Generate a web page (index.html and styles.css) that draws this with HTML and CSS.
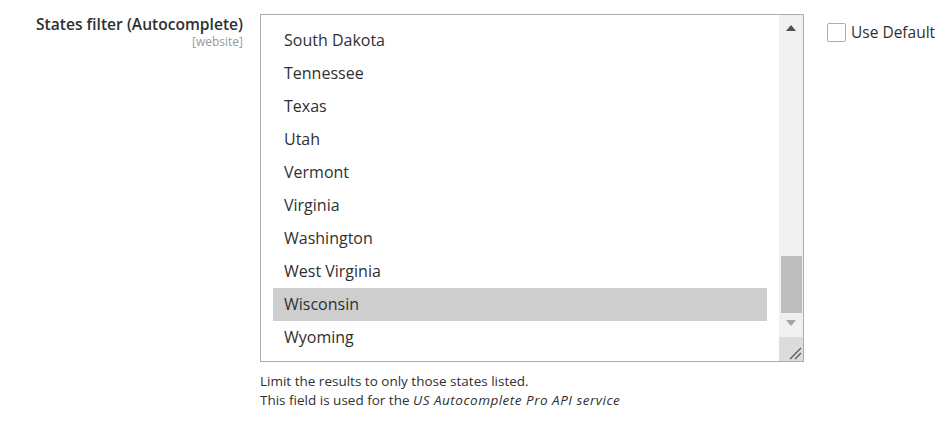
FILE: index.html
```html
<!DOCTYPE html>
<html>
<head>
<meta charset="utf-8">
<link rel="stylesheet" href="styles.css">
</head>
<body>
<div class="field">
  <div class="label">
    <span class="label-text">States filter (Autocomplete)</span>
    <span class="scope">[website]</span>
  </div>
  <div class="control">
    <div class="listbox">
      <div class="options">
        <div class="option">South Dakota</div>
        <div class="option">Tennessee</div>
        <div class="option">Texas</div>
        <div class="option">Utah</div>
        <div class="option">Vermont</div>
        <div class="option">Virginia</div>
        <div class="option">Washington</div>
        <div class="option">West Virginia</div>
        <div class="option selected">Wisconsin</div>
        <div class="option">Wyoming</div>
      </div>
      <div class="scrollbar">
        <div class="arrow up"></div>
        <div class="track"><div class="thumb"></div></div>
        <div class="arrow down"></div>
        <div class="resizer">
          <svg width="14" height="14" viewBox="0 0 14 14"><path d="M2 13 L13 2 M7 13 L13 7" stroke="#555" stroke-width="1.3" fill="none"/></svg>
        </div>
      </div>
    </div>
    <div class="note">
      <div>Limit the results to only those states listed.</div>
      <div>This field is used for the <em>US Autocomplete Pro API service</em></div>
    </div>
  </div>
  <label class="use-default"><span class="checkbox"></span><span>Use Default</span></label>
</div>
</body>
</html>
```
FILE: styles.css
```css
* { box-sizing: border-box; }
body {
  margin: 0;
  background: #fff;
  font-family: "Open Sans", "Liberation Sans", sans-serif;
  color: #303030;
}
.field {
  display: flex;
  align-items: flex-start;
  padding-top: 14px;
}
.label {
  width: 244px;
  padding-right: 1px;
  display: flex;
  flex-direction: column;
  align-items: flex-end;
  margin-right: 16px;
}
.label-text {
  font-size: 15.6px;
  font-weight: 600;
  line-height: 20px;
}
.scope {
  font-size: 12px;
  color: #999;
  line-height: 14px;
  margin-top: 1px;
}
.control {
  width: 544px;
}
.listbox {
  height: 348px;
  border: 1px solid #adadad;
  display: flex;
  overflow: hidden;
}
.options {
  flex: 1;
  padding: 9px 12px 0 12px;
}
.option {
  height: 33px;
  line-height: 33px;
  font-size: 16px;
  padding-left: 11px;
  color: #303030;
}
.option.selected {
  background: #cecece;
}
.scrollbar {
  width: 24px;
  background: #f0f0f0;
  display: flex;
  flex-direction: column;
  align-items: center;
}
.arrow {
  width: 0;
  height: 0;
  border-left: 5px solid transparent;
  border-right: 5px solid transparent;
}
.arrow.up {
  margin-top: 10px;
  border-bottom: 6px solid #505050;
}
.track {
  flex: 1;
  width: 100%;
  position: relative;
}
.thumb {
  position: absolute;
  left: 2px;
  right: 1px;
  bottom: 7px;
  height: 57px;
  background: #bdbdbd;
}
.arrow.down {
  border-top: 6px solid #a3a3a3;
  margin-bottom: 11px;
}
.resizer {
  width: 100%;
  height: 24px;
  background: #dcdcdc;
  display: flex;
  align-items: flex-end;
  justify-content: flex-end;
  padding: 0 1px 1px 0;
}
.resizer svg { display: block; }
.note {
  margin-top: 10px;
  font-size: 13.5px;
  line-height: 19px;
}
.note em { font-style: italic; letter-spacing: 0.5px; }
.use-default {
  display: flex;
  align-items: center;
  margin-left: 23px;
  margin-top: 8px;
  font-size: 15.5px;
  line-height: 20px;
}
.checkbox {
  width: 19px;
  height: 19px;
  border: 1px solid #adadad;
  border-radius: 2px;
  margin-right: 5px;
  background: #fff;
}
```
